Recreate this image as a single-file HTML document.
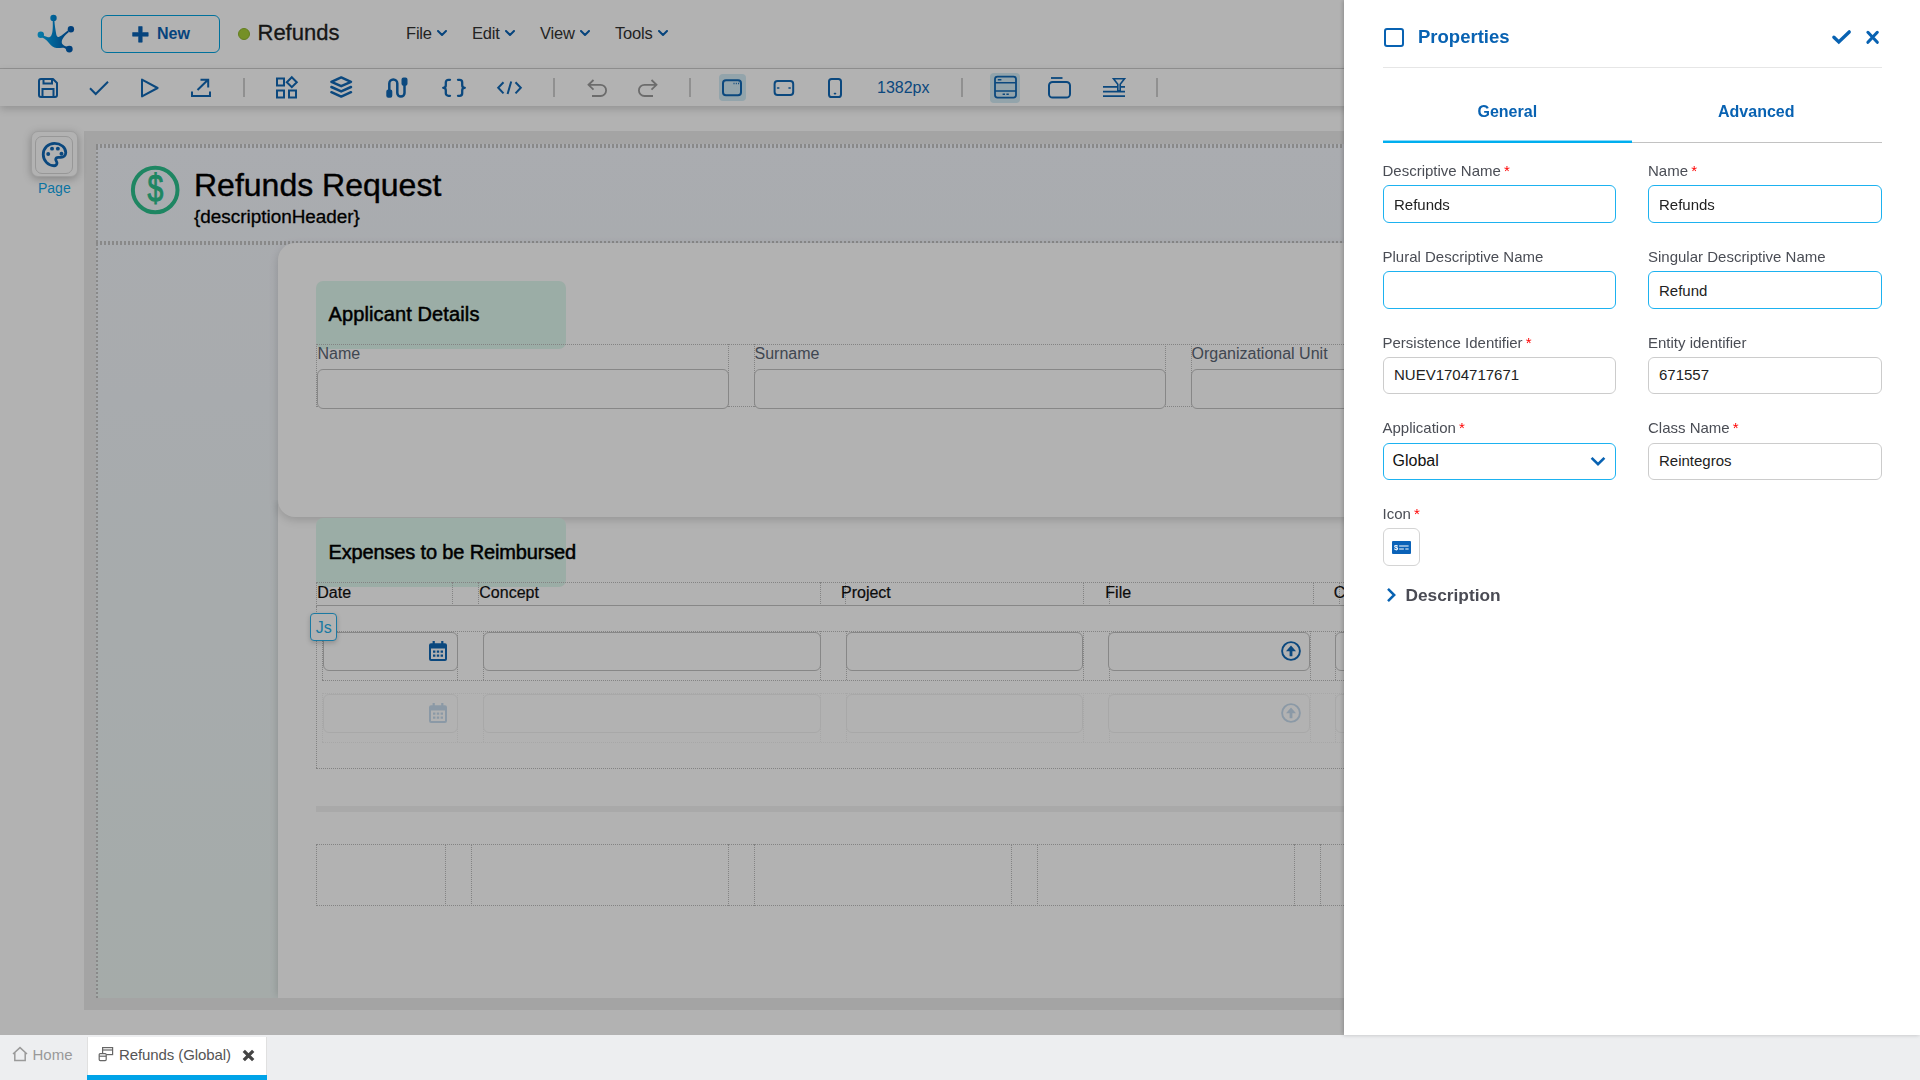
<!DOCTYPE html>
<html lang="en">
<head>
<meta charset="utf-8">
<title>Refunds</title>
<style>
*{box-sizing:border-box;margin:0;padding:0}
html,body{width:1920px;height:1080px;overflow:hidden;background:#fff;font-family:"Liberation Sans",sans-serif;}
.abs{position:absolute}
#app{position:absolute;left:0;top:0;width:1920px;height:1035px;background:#fff;overflow:hidden}
#overlay{position:absolute;left:0;top:0;width:1920px;height:1035px;background:rgba(0,0,0,.3);z-index:50}
.t{position:absolute;white-space:nowrap;line-height:1}
/* top bar */
#topbar{position:absolute;left:0;top:0;width:1920px;height:69px;border-bottom:1px solid #d2d2d2;background:#fff}
#newbtn{position:absolute;left:101px;top:15px;width:119px;height:38px;border:1px solid #00a3e0;border-radius:6px}
#toolbar{position:absolute;left:0;top:69px;width:1920px;height:37px;background:#fff;box-shadow:0 3px 8px rgba(0,0,0,.18);z-index:5}
.sep{position:absolute;top:9px;width:2px;height:19px;background:#cfcfcf}
.ico{position:absolute}
.ico svg{display:block}
.t.m{font-size:16.5px;color:#333;letter-spacing:-0.2px}
.chev path{fill:none;stroke:#0a62b3;stroke-width:2;stroke-linecap:round;stroke-linejoin:round}
/* canvas */
#canvas{position:absolute;left:84px;top:131px;width:1836px;height:879px;background:#ebebeb}
#pagebg{position:absolute;left:12px;top:13px;width:1824px;height:854px;background:linear-gradient(180deg,#f1f3f8 0%,#eef3f5 40%,#e8f3f2 100%)}
.input{position:absolute;border:1px solid #c2c2c2;border-radius:6px;background:#fff}
.dot{position:absolute;border:0 dotted #9a9a9a}
#content{position:absolute;left:0;top:0;width:1920px;height:1035px}
.t.sec{font-size:20px;color:#000;-webkit-text-stroke:0.5px #000}
.t.fl{font-size:16px;color:#5c6674}
.t.th{font-size:16px;color:#111;-webkit-text-stroke:0.2px #111}
/* panel */
#panel{position:absolute;left:1344px;top:0;width:576px;height:1035px;background:#fff;z-index:60;box-shadow:-1px 0 4px rgba(0,0,0,.22)}
#panel .lbl{position:absolute;white-space:nowrap;font-size:15px;line-height:1;color:#4a4d55}
#panel .lbl i{color:#f00;font-style:normal;margin-left:-1px}
#panel .inp{position:absolute;height:38px;width:233px;border-radius:6px;border:1px solid #ccc;background:#fff;font-size:15px;color:#222;line-height:36px;padding-left:10px;padding-top:1px}
#panel .inp.b{border:1px solid #1db2f0}
#panel .inp.s{height:37px;line-height:34px;padding-top:0}
/* tab bar */
#tabbar{position:absolute;left:0;top:1035px;width:1920px;height:45px;background:#edeef0}
</style>
</head>
<body>
<div id="app">
  <div id="topbar">
    <svg class="abs" style="left:34px;top:11px" width="46" height="46" viewBox="34 11 46 46">
      <defs><linearGradient id="lg" gradientUnits="userSpaceOnUse" x1="38" y1="0" x2="73" y2="0"><stop offset="0" stop-color="#0db2f2"/><stop offset="0.45" stop-color="#008ad6"/><stop offset="0.8" stop-color="#0062b6"/><stop offset="1" stop-color="#0058ac"/></linearGradient></defs>
      <g fill="url(#lg)">
        <circle cx="53.5" cy="17.9" r="3.200"/><circle cx="70.900" cy="29.300" r="3.200"/><circle cx="40.800" cy="34.800" r="3.200"/><circle cx="69.300" cy="49.100" r="3.400"/>
        <path d="M52.700 20.500C52.900 25 52.900 28 52.500 31C52.200 33 51.900 34.300 51.300 35.400C50.500 37 49 37.600 47.300 37L43 35.500L42.200 37.500C45.500 39 47.700 41.300 49.600 43.800C51.300 46 53.500 47.600 56.500 47.900C59.500 48.200 62 47.200 64.300 47.900L66.800 49.600L67.800 46.800L65.500 46.200C63.300 45.500 61.700 44 61.700 42C61.700 39.500 63.800 36.700 66 34.500L68.900 32L67.800 30.600L64.700 33C62.500 34.800 60.500 36.300 58.800 36.900C57.300 37.400 56.500 36 56.100 33.500C55.600 30 54.600 25 54.400 20.500Z"/>
      </g>
    </svg>
    <div id="newbtn"></div>
    <svg class="abs" style="left:132px;top:26px" width="17" height="17" viewBox="0 0 17 17"><path d="M6.6 0.6h3.6v6h6v3.6h-6v6H6.6v-6h-6V6.6h6z" fill="#0a62b3" stroke="#0a62b3" stroke-width="0.6" stroke-linejoin="round"/></svg>
    <div class="t" id="t_new" style="left:157px;top:26.4px;font-size:16px;font-weight:bold;color:#0a62b3">New</div>
    <div class="abs" style="left:238px;top:28px;width:12px;height:12px;border-radius:50%;background:#a8cf38;border:1px solid #8fb52e"></div>
    <div class="t" id="t_title" style="left:257.5px;top:22.4px;font-size:22px;color:#222;-webkit-text-stroke:0.3px #222">Refunds</div>
    <div class="t m" id="t_file" style="top:25.4px;left:406px">File</div>
    <div class="t m" id="t_edit" style="top:25.4px;left:472px">Edit</div>
    <div class="t m" id="t_view" style="top:25.4px;left:540px">View</div>
    <div class="t m" id="t_tools" style="top:25.4px;left:615px">Tools</div>
    <svg class="abs chev" style="left:437px;top:30px" width="10" height="7" viewBox="0 0 10 7"><path d="M1 1l4 4 4-4"/></svg>
    <svg class="abs chev" style="left:505px;top:30px" width="10" height="7" viewBox="0 0 10 7"><path d="M1 1l4 4 4-4"/></svg>
    <svg class="abs chev" style="left:580px;top:30px" width="10" height="7" viewBox="0 0 10 7"><path d="M1 1l4 4 4-4"/></svg>
    <svg class="abs chev" style="left:658px;top:30px" width="10" height="7" viewBox="0 0 10 7"><path d="M1 1l4 4 4-4"/></svg>
  </div>
  <div id="toolbar">
    <div class="abs" style="left:719px;top:5px;width:27px;height:27px;border-radius:4px;background:#d3ebf5"></div>
    <div class="abs" style="left:990px;top:4px;width:30px;height:30px;border-radius:4px;background:#d3ebf5"></div>
    <svg class="abs" style="left:0;top:0" width="1344" height="37" viewBox="0 69 1344 37">
      <g fill="none" stroke="#1068b5" stroke-width="2" stroke-linejoin="round" stroke-linecap="round">
        <!-- save -->
        <path d="M39 81a2 2 0 0 1 2-2h12l4 4v12a2 2 0 0 1-2 2H41a2 2 0 0 1-2-2z" stroke-linecap="butt"/>
        <path d="M43.5 79.5v4h8.5v-4M42.5 96.5v-7.5h11v7.5" stroke-linecap="butt" stroke-linejoin="miter"/>
        <!-- check -->
        <path d="M90 88.3l5.7 5.7L108 81.8" stroke-linecap="butt" stroke-linejoin="miter"/>
        <!-- play -->
        <path d="M142 79.6L157.6 88L142 96.4z"/>
        <!-- export -->
        <path d="M192 91.5v4.5h18v-4.5" stroke-linecap="butt" stroke-linejoin="miter"/>
        <path d="M197.5 90L208 79.8M200.5 79.8h7.7v7.7" stroke-linecap="butt" stroke-linejoin="miter"/>
        <!-- apps -->
        <g stroke-linejoin="miter" stroke-linecap="butt">
        <rect x="277" y="78.5" width="7" height="7"/><rect x="277" y="90.5" width="7" height="7"/><rect x="289" y="90.5" width="7" height="7"/>
        <path d="M291.8 77.2l5 5-5 5-5-5z"/>
        </g>
        <!-- layers -->
        <path d="M341.200 77.400l9.800 4.400-9.800 4.400-9.800-4.400z" stroke-width="2.500"/>
        <path d="M331.400 87l9.800 4.400 9.800-4.400M331.400 92.200l9.800 4.400 9.800-4.400" stroke-width="2.500"/>
        <!-- route -->
        <path d="M389.300 90V83.500a4 4 0 0 1 8 0V93a3.600 3.600 0 0 0 7.200 0V84" stroke-width="2.500"/>
        <rect x="387" y="90.200" width="4.600" height="6.800" rx="1.300" fill="#1068b5" stroke-width="1.400"/>
        <rect x="402.200" y="78.300" width="4.600" height="6.800" rx="1.300" fill="#1068b5" stroke-width="1.400"/>
        <!-- braces -->
        <path d="M450 79.8h-1.6a2.6 2.6 0 0 0-2.6 2.6v2.8a2.6 2.6 0 0 1-2.6 2.6a2.6 2.6 0 0 1 2.6 2.6v2.8a2.6 2.6 0 0 0 2.6 2.6h1.6" stroke-width="2.3"/>
        <path d="M458 79.8h1.6a2.6 2.6 0 0 1 2.6 2.6v2.8a2.6 2.6 0 0 0 2.6 2.6a2.6 2.6 0 0 0-2.6 2.6v2.8a2.6 2.6 0 0 1-2.6 2.6h-1.6" stroke-width="2.3"/>
        <!-- code -->
        <path d="M503.5 82.2l-5.3 5.6 5.3 5.6M515.5 82.2l5.3 5.6-5.3 5.6M511.2 81.5l-3.6 12.6" stroke-linejoin="miter" stroke-linecap="butt"/>
      </g>
      <g fill="none" stroke="#9b9b9b" stroke-width="1.8" stroke-linejoin="miter" stroke-linecap="butt">
        <!-- undo -->
        <path d="M593.5 80l-5 4.8 5 4.8M589 84.8h11.5a5.6 5.6 0 0 1 0 11.2H592"/>
        <!-- redo -->
        <path d="M651.5 80l5 4.8-5 4.8M656 84.8h-11.5a5.6 5.6 0 0 0 0 11.2H653"/>
      </g>
      <g fill="none" stroke="#1068b5" stroke-width="2" stroke-linejoin="round">
        <!-- desktop -->
        <rect x="723" y="80.3" width="18" height="15" rx="3"/>
        <path d="M733.5 83.5h1M735.8 83.5h1M738.1 83.5h1" stroke-width="1.3"/>
        <!-- tablet -->
        <rect x="774.6" y="81" width="18.6" height="14" rx="3"/>
        <path d="M777.6 88h1.2M789 88h1.2" stroke-width="1.6" stroke-linecap="round"/>
        <!-- mobile -->
        <rect x="829" y="79" width="12" height="18" rx="2.6"/>
        <path d="M834.5 93.6h1" stroke-width="1.6" stroke-linecap="round"/>
        <!-- layout -->
        <rect x="995" y="76.6" width="21" height="21" rx="2.5" stroke-width="1.8"/>
        <path d="M995 82.8h21M995 91h21" stroke-width="1.6"/>
        <path d="M997.8 79.7h3.6M1002.6 94.2h2.4M1006.4 94.2h2.4" stroke-width="1.4"/>
        <!-- tabs -->
        <rect x="1049" y="82" width="21" height="15.6" rx="3.6"/>
        <path d="M1051 78h11.5" stroke-width="1.8"/>
        <!-- filter lines -->
        <path d="M1103 86.8h22M1103 91.6h22M1103 96.2h22" stroke-width="1.7"/>
        <path d="M1113.5 78.8h11l-4.3 5.4v6.5h-2.4v-6.5z" stroke-width="1.6" stroke-linejoin="miter" fill="#fff"/>
      </g>
    </svg>
    <div class="sep" style="left:243px"></div><div class="sep" style="left:553px"></div><div class="sep" style="left:689px"></div><div class="sep" style="left:961px"></div><div class="sep" style="left:1156px"></div>
    <div class="t" id="t_px" style="left:877px;top:10.5px;font-size:16px;color:#1068b5">1382px</div>
  </div>
  <div id="canvas"></div>
  <div id="content">
  <div class="abs" style="left:96px;top:144px;width:1824px;height:854px;background:linear-gradient(180deg,#f4f6fc 0%,#f1f5f9 30%,#ecf5f3 100%)"></div>
  <div class="abs" style="left:96px;top:144px;width:1824px;height:4px;background:repeating-linear-gradient(90deg,#c4c4c4 0 2px,transparent 2px 4px)"></div>
  <div class="abs" style="left:96px;top:241px;width:1824px;height:4px;background:repeating-linear-gradient(90deg,#c4c4c4 0 2px,transparent 2px 4px)"></div>
  <div class="abs" style="left:96px;top:144px;width:2px;height:854px;background:repeating-linear-gradient(180deg,#c4c4c4 0 2px,transparent 2px 4px)"></div>
  <svg class="abs" style="left:129px;top:164px" width="52" height="52" viewBox="129 164 52 52"><circle cx="155.2" cy="190" r="22.3" fill="none" stroke="#2cc08d" stroke-width="4"/><text transform="translate(155.5 202.4) scale(0.86 1.18)" x="0" y="0" text-anchor="middle" font-family="Liberation Sans, sans-serif" font-size="33" fill="#2cc08d" stroke="#2cc08d" stroke-width="0.9">$</text></svg>
  <div class="t" id="t_h1" style="left:194px;top:169.2px;font-size:32px;color:#000;-webkit-text-stroke:0.4px #000">Refunds Request</div>
  <div class="t" id="t_h2" style="left:194px;top:207.8px;font-size:18.9px;color:#000;-webkit-text-stroke:0.3px #000">{descriptionHeader}</div>
  <div class="abs" style="left:278px;top:500px;width:1700px;height:498px;background:#fff;box-shadow:-3px 0 7px -2px rgba(0,0,0,.14);clip-path:inset(0 0 0 -12px)"></div>
  <div class="abs" style="left:278px;top:243px;width:1700px;height:274px;background:#fff;border-radius:17px;box-shadow:0 3px 10px rgba(0,0,0,.16)"></div>
  <div class="abs" style="left:316px;top:281px;width:250px;height:68px;border-radius:7px;background:#dff8ee"></div>
  <div class="abs" style="left:316px;top:518px;width:250px;height:69px;border-radius:7px;background:#dff8ee"></div>
  <div class="t sec" id="t_s1" style="left:328.5px;top:304px;letter-spacing:0.12px">Applicant Details</div>
  <div class="t sec" id="t_s2" style="left:328.5px;top:542.4px;letter-spacing:-0.15px">Expenses to be Reimbursed</div>
  <div class="abs" style="left:316px;top:344px;width:1604px;height:0;border-top:1px dotted #bcbcbc"></div>
  <div class="abs" style="left:316px;top:406px;width:1604px;height:0;border-top:1px dotted #bcbcbc"></div>
  <div class="abs" style="left:316px;top:344px;height:63px;width:0;border-left:1px dotted #bcbcbc"></div>
  <div class="abs" style="left:728px;top:344px;height:63px;width:0;border-left:1px dotted #bcbcbc"></div>
  <div class="abs" style="left:754px;top:344px;height:63px;width:0;border-left:1px dotted #bcbcbc"></div>
  <div class="abs" style="left:1165px;top:344px;height:63px;width:0;border-left:1px dotted #bcbcbc"></div>
  <div class="abs" style="left:1191px;top:344px;height:63px;width:0;border-left:1px dotted #bcbcbc"></div>
  <div class="t fl" id="t_fa" style="left:317.5px;top:345.5px">Name</div>
  <div class="t fl" id="t_fb" style="left:754.5px;top:345.5px">Surname</div>
  <div class="t fl" id="t_fc" style="left:1191.5px;top:345.5px">Organizational Unit</div>
  <div class="input" style="left:317px;top:369px;width:412px;height:40px"></div>
  <div class="input" style="left:754px;top:369px;width:412px;height:40px"></div>
  <div class="input" style="left:1191px;top:369px;width:412px;height:40px"></div>
  <div class="abs" style="left:316px;top:582px;width:1604px;height:0;border-top:1px dotted #bcbcbc"></div>
  <div class="abs" style="left:316px;top:582px;height:24px;width:0;border-left:1px dotted #bcbcbc"></div>
  <div class="abs" style="left:452px;top:582px;height:24px;width:0;border-left:1px dotted #bcbcbc"></div>
  <div class="abs" style="left:478px;top:582px;height:24px;width:0;border-left:1px dotted #bcbcbc"></div>
  <div class="abs" style="left:819.5px;top:582px;height:24px;width:0;border-left:1px dotted #bcbcbc"></div>
  <div class="abs" style="left:845px;top:582px;height:24px;width:0;border-left:1px dotted #bcbcbc"></div>
  <div class="abs" style="left:1083px;top:582px;height:24px;width:0;border-left:1px dotted #bcbcbc"></div>
  <div class="abs" style="left:1109px;top:582px;height:24px;width:0;border-left:1px dotted #bcbcbc"></div>
  <div class="abs" style="left:1313px;top:582px;height:24px;width:0;border-left:1px dotted #bcbcbc"></div>
  <div class="abs" style="left:1339px;top:582px;height:24px;width:0;border-left:1px dotted #bcbcbc"></div>
  <div class="abs" style="left:316px;top:605px;width:1604px;height:1px;background:#c2c2c2"></div>
  <div class="t th" id="t_ha" style="left:317.3px;top:585.2px">Date</div>
  <div class="t th" id="t_hb" style="left:479.3px;top:585.2px">Concept</div>
  <div class="t th" id="t_hc" style="left:841px;top:585.2px">Project</div>
  <div class="t th" id="t_hd" style="left:1105.3px;top:585.2px">File</div>
  <div class="t th" id="t_he" style="left:1333.7px;top:585.2px">Concept</div>
  <div class="abs" style="left:315.5px;top:606px;height:162px;width:0;border-left:1px dotted #bcbcbc"></div>
  <div class="abs" style="left:315.5px;top:768px;width:1604px;height:0;border-top:1px dotted #bcbcbc"></div>
  <div class="abs" style="left:0;top:0;opacity:1"><div class="abs" style="left:322px;top:631px;width:1598px;height:0;border-top:1px dotted #bcbcbc"></div><div class="abs" style="left:322px;top:680px;width:1598px;height:0;border-top:1px dotted #bcbcbc"></div><div class="abs" style="left:322px;top:631px;height:49px;width:0;border-left:1px dotted #bcbcbc"></div><div class="abs" style="left:457px;top:631px;height:49px;width:0;border-left:1px dotted #bcbcbc"></div><div class="abs" style="left:483px;top:631px;height:49px;width:0;border-left:1px dotted #bcbcbc"></div><div class="abs" style="left:820px;top:631px;height:49px;width:0;border-left:1px dotted #bcbcbc"></div><div class="abs" style="left:846px;top:631px;height:49px;width:0;border-left:1px dotted #bcbcbc"></div><div class="abs" style="left:1082.5px;top:631px;height:49px;width:0;border-left:1px dotted #bcbcbc"></div><div class="abs" style="left:1108.5px;top:631px;height:49px;width:0;border-left:1px dotted #bcbcbc"></div><div class="abs" style="left:1310px;top:631px;height:49px;width:0;border-left:1px dotted #bcbcbc"></div><div class="abs" style="left:1335px;top:631px;height:49px;width:0;border-left:1px dotted #bcbcbc"></div><div class="input" style="left:323px;top:632px;width:135px;height:39px"></div><div class="input" style="left:483px;top:632px;width:338px;height:39px"></div><div class="input" style="left:846px;top:632px;width:237px;height:39px"></div><div class="input" style="left:1108px;top:632px;width:202px;height:39px"></div><div class="input" style="left:1335px;top:632px;width:300px;height:39px"></div><svg class="abs" style="left:429px;top:640.8px" width="18" height="20" viewBox="0 0 18 20"><path fill="#1068b5" fill-rule="evenodd" d="M3.6 0h2.2v2.2h6.4V0h2.2v2.2H16a2 2 0 0 1 2 2V18a2 2 0 0 1-2 2H2a2 2 0 0 1-2-2V4.2a2 2 0 0 1 2-2h1.6zM2 7.4V18h14V7.4zM4 9.4h2.4v2.4H4zM7.8 9.4h2.4v2.4H7.8zM11.6 9.4H14v2.4h-2.4zM4 13.4h2.4v2.4H4zM7.8 13.4h2.4v2.4H7.8zM11.6 13.4H14v2.4h-2.4z"/></svg><svg class="abs" style="left:1280px;top:639.9px" width="22" height="22" viewBox="0 0 22 22"><circle cx="11" cy="11" r="8.900" fill="none" stroke="#1068b5" stroke-width="1.900"/><path d="M11 5.600L16 11.200H12.400V16.200H9.600V11.200H6z" fill="#1068b5"/></svg></div>
  <div class="abs" style="left:0;top:0;opacity:0.23"><div class="abs" style="left:322px;top:693px;width:1598px;height:0;border-top:1px dotted #bcbcbc"></div><div class="abs" style="left:322px;top:742px;width:1598px;height:0;border-top:1px dotted #bcbcbc"></div><div class="abs" style="left:322px;top:693px;height:49px;width:0;border-left:1px dotted #bcbcbc"></div><div class="abs" style="left:457px;top:693px;height:49px;width:0;border-left:1px dotted #bcbcbc"></div><div class="abs" style="left:483px;top:693px;height:49px;width:0;border-left:1px dotted #bcbcbc"></div><div class="abs" style="left:820px;top:693px;height:49px;width:0;border-left:1px dotted #bcbcbc"></div><div class="abs" style="left:846px;top:693px;height:49px;width:0;border-left:1px dotted #bcbcbc"></div><div class="abs" style="left:1082.5px;top:693px;height:49px;width:0;border-left:1px dotted #bcbcbc"></div><div class="abs" style="left:1108.5px;top:693px;height:49px;width:0;border-left:1px dotted #bcbcbc"></div><div class="abs" style="left:1310px;top:693px;height:49px;width:0;border-left:1px dotted #bcbcbc"></div><div class="abs" style="left:1335px;top:693px;height:49px;width:0;border-left:1px dotted #bcbcbc"></div><div class="input" style="left:323px;top:694px;width:135px;height:39px"></div><div class="input" style="left:483px;top:694px;width:338px;height:39px"></div><div class="input" style="left:846px;top:694px;width:237px;height:39px"></div><div class="input" style="left:1108px;top:694px;width:202px;height:39px"></div><div class="input" style="left:1335px;top:694px;width:300px;height:39px"></div><svg class="abs" style="left:429px;top:702.8px" width="18" height="20" viewBox="0 0 18 20"><path fill="#1068b5" fill-rule="evenodd" d="M3.6 0h2.2v2.2h6.4V0h2.2v2.2H16a2 2 0 0 1 2 2V18a2 2 0 0 1-2 2H2a2 2 0 0 1-2-2V4.2a2 2 0 0 1 2-2h1.6zM2 7.4V18h14V7.4zM4 9.4h2.4v2.4H4zM7.8 9.4h2.4v2.4H7.8zM11.6 9.4H14v2.4h-2.4zM4 13.4h2.4v2.4H4zM7.8 13.4h2.4v2.4H7.8zM11.6 13.4H14v2.4h-2.4z"/></svg><svg class="abs" style="left:1280px;top:701.9px" width="22" height="22" viewBox="0 0 22 22"><circle cx="11" cy="11" r="8.900" fill="none" stroke="#1068b5" stroke-width="1.900"/><path d="M11 5.600L16 11.200H12.400V16.200H9.600V11.200H6z" fill="#1068b5"/></svg></div>
  <div class="abs" style="left:310px;top:613px;width:27px;height:28px;border:1.5px solid #27aee8;border-radius:4px;background:#fff;box-shadow:0 2px 5px rgba(0,0,0,.2)"></div>
  <div class="t" id="t_js" style="left:315.7px;top:620.2px;font-size:16px;color:#27aee8">Js</div>
  <div class="abs" style="left:316px;top:806px;width:1604px;height:6px;background:#f3f3f3"></div>
  <div class="abs" style="left:316px;top:843.5px;width:1604px;height:0;border-top:1px dotted #bcbcbc"></div>
  <div class="abs" style="left:316px;top:905px;width:1604px;height:0;border-top:1px dotted #bcbcbc"></div>
  <div class="abs" style="left:316px;top:843.5px;height:62px;width:0;border-left:1px dotted #bcbcbc"></div>
  <div class="abs" style="left:445px;top:843.5px;height:62px;width:0;border-left:1px dotted #bcbcbc"></div>
  <div class="abs" style="left:471px;top:843.5px;height:62px;width:0;border-left:1px dotted #bcbcbc"></div>
  <div class="abs" style="left:728px;top:843.5px;height:62px;width:0;border-left:1px dotted #bcbcbc"></div>
  <div class="abs" style="left:754px;top:843.5px;height:62px;width:0;border-left:1px dotted #bcbcbc"></div>
  <div class="abs" style="left:1011px;top:843.5px;height:62px;width:0;border-left:1px dotted #bcbcbc"></div>
  <div class="abs" style="left:1037px;top:843.5px;height:62px;width:0;border-left:1px dotted #bcbcbc"></div>
  <div class="abs" style="left:1294px;top:843.5px;height:62px;width:0;border-left:1px dotted #bcbcbc"></div>
  <div class="abs" style="left:1320px;top:843.5px;height:62px;width:0;border-left:1px dotted #bcbcbc"></div>
  <div class="abs" style="left:31px;top:131px;width:47px;height:46px;border-radius:7px;background:#fff;border:1px solid #e2e2e2;box-shadow:0 2px 8px rgba(0,0,0,.26)"></div>
  <div class="abs" style="left:35px;top:136px;width:38px;height:38px;border-radius:7px;background:#fff;border:1px solid #d9d9d9"></div>
  <svg class="abs" style="left:41px;top:141px" width="27" height="27" viewBox="0 0 24 24"><path fill="none" stroke="#1068b5" stroke-width="2.500" d="M12 2.1c-5.6 0-10 4.3-10 9.9 0 5.4 4.3 10 9.6 10 1.6 0 2.6-1.2 2.6-2.4 0-.7-.3-1.2-.6-1.7-.3-.5-.5-.9-.5-1.4 0-1.2 1-2 2.2-2h2.4c2.500 0 4.300-1.800 4.300-4.300 0-4.600-4.500-8.100-10-8.100z"/><g fill="#1068b5"><circle cx="6.400" cy="11.600" r="1.750"/><circle cx="9.800" cy="6.800" r="1.750"/><circle cx="15" cy="6.800" r="1.750"/><circle cx="18.200" cy="11.400" r="1.750"/></g></svg>
  <div class="t" id="t_page" style="left:38px;top:180.6px;font-size:14px;color:#12a6e8">Page</div>
  </div>
  <div id="overlay"></div>
</div>
<div id="panel">
  <div class="abs" style="left:40px;top:28px;width:20px;height:19px;border:2px solid #0862b2;border-radius:3px"></div>
  <div class="t" id="p_title" style="left:74px;top:27.6px;font-size:18.5px;font-weight:bold;color:#0862b2">Properties</div>
  <svg class="abs" style="left:487px;top:29px" width="21" height="17" viewBox="0 0 21 17"><path d="M2.900 8.200L7.800 12.900L18.200 2.900" fill="none" stroke="#0862b2" stroke-width="3.400" stroke-linecap="round"/></svg>
  <svg class="abs" style="left:521px;top:30px" width="15" height="15" viewBox="0 0 15 15"><path d="M2.900 2.300L12.300 12.300M12.300 2.300L2.900 12.300" fill="none" stroke="#0862b2" stroke-width="3.100" stroke-linecap="round"/></svg>
  <div class="abs" style="left:39px;top:67px;width:499px;height:1px;background:#e6e6e6"></div>
  <div class="t" id="p_gen" style="left:133.5px;top:104px;font-size:16px;font-weight:bold;color:#0862b2">General</div>
  <div class="t" id="p_adv" style="left:374px;top:104px;font-size:16px;font-weight:bold;color:#0862b2">Advanced</div>
  <div class="abs" style="left:288px;top:142px;width:250px;height:1px;background:#c2c2c2"></div>
  <div class="abs" style="left:39px;top:141px;width:249px;height:2px;background:#00aeef"></div><div class="abs" style="left:39px;top:140px;width:249px;height:1px;background:rgba(0,174,239,.45)"></div>
  <div class="lbl" id="p_l0a" style="left:38.5px;top:162.5px">Descriptive Name <i>*</i></div>
  <div class="lbl" id="p_l0b" style="left:304px;top:162.5px">Name <i>*</i></div>
  <div class="inp b" id="p_i0a" style="left:39px;top:185px">Refunds</div>
  <div class="inp b" id="p_i0b" style="left:304px;top:185px;width:234px">Refunds</div>
  <div class="lbl" id="p_l1a" style="left:38.5px;top:248.7px">Plural Descriptive Name</div>
  <div class="lbl" id="p_l1b" style="left:304px;top:248.7px">Singular Descriptive Name</div>
  <div class="inp b" id="p_i1a" style="left:39px;top:271px"></div>
  <div class="inp b" id="p_i1b" style="left:304px;top:271px;width:234px">Refund</div>
  <div class="lbl" id="p_l2a" style="left:38.5px;top:334.5px">Persistence Identifier <i>*</i></div>
  <div class="lbl" id="p_l2b" style="left:304px;top:334.5px">Entity identifier</div>
  <div class="inp s" id="p_i2a" style="left:39px;top:357px">NUEV1704717671</div>
  <div class="inp s" id="p_i2b" style="left:304px;top:357px;width:234px">671557</div>
  <div class="lbl" id="p_l3a" style="left:38.5px;top:420.2px">Application <i>*</i></div>
  <div class="lbl" id="p_l3b" style="left:304px;top:420.2px">Class Name <i>*</i></div>
  <div class="inp b s" id="p_i3a" style="left:39px;top:443px;padding-left:8.5px;color:#111;font-size:16px">Global</div>
  <div class="inp s" id="p_i3b" style="left:304px;top:443px;width:234px">Reintegros</div>
  <svg class="abs" style="left:246px;top:456px" width="16" height="11" viewBox="0 0 16 11"><path d="M1.6 1.8L8 8.2l6.4-6.4" fill="none" stroke="#0862b2" stroke-width="2.6"/></svg>
  <div class="lbl" id="p_l4a" style="left:38.5px;top:505.7px">Icon <i>*</i></div>
  <div class="abs" style="left:39px;top:527.5px;width:37px;height:38px;border:1px solid #d4d4d4;border-radius:6px;background:#fff"></div>
  <svg class="abs" style="left:48px;top:541px" width="19" height="13" viewBox="0 0 20 13" preserveAspectRatio="none"><rect x="0" y="0" width="20" height="13" rx="1" fill="#0a62b8"/><path d="M7.5 5h10M7.500 8h5M14 8h3.500" stroke="#fff" stroke-width="1.200"/><text x="2.2" y="9.400" font-family="Liberation Sans, sans-serif" font-size="8" font-weight="bold" fill="#fff">$</text></svg>
  <svg class="abs" style="left:42px;top:587px" width="11" height="16" viewBox="0 0 11 16"><path d="M2 1.8L8.2 8 2 14.2" fill="none" stroke="#0862b2" stroke-width="2.5"/></svg>
  <div class="t" id="p_desc" style="left:61.5px;top:586.8px;font-size:17.3px;font-weight:bold;color:#4a4b54">Description</div>
</div>
<div id="tabbar">
  <svg class="abs" style="left:12px;top:11px" width="16" height="16" viewBox="0 0 16 16"><path d="M1 8L8 1.600 15 8M2.800 6.800V14.600H13.200V6.800" fill="none" stroke="#9a9a9a" stroke-width="1.500"/></svg>
  <div class="t" id="b_home" style="left:32.5px;top:12px;font-size:15px;color:#999">Home</div>
  <div class="abs" style="left:87px;top:1.5px;width:180px;height:44px;background:#fff;border-left:1px solid #e0e0e0;border-right:1px solid #e0e0e0"></div>
  <div class="abs" style="left:87px;top:40px;width:180px;height:5px;background:#00a3e8"></div>
  <svg class="abs" style="left:98px;top:11px" width="16" height="16" viewBox="0 0 16 16"><g fill="none" stroke="#666" stroke-width="1.200"><rect x="4.600" y="1.600" width="10" height="7" /><path d="M4.600 4H14.600"/><rect x="1.200" y="7.600" width="7" height="7" rx="1" fill="#fff"/><path d="M1.200 10.200H8.200"/></g></svg>
  <div class="t" id="b_tab" style="left:119px;top:12px;font-size:15px;color:#555;letter-spacing:-0.1px">Refunds (Global)</div>
  <svg class="abs" style="left:241.500px;top:13.700px" width="13" height="13" viewBox="0 0 13 13"><path d="M1.800 1.800l9.400 9.400M11.200 1.800l-9.400 9.400" stroke="#444" stroke-width="3.300" fill="none"/></svg>
</div>
</body>
</html>
